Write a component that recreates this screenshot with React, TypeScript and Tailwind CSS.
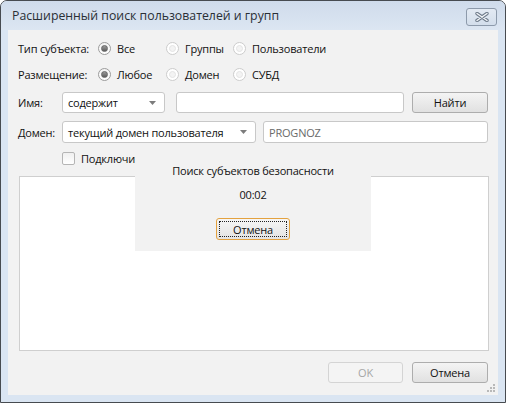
import React from "react";

const font = { fontFamily: '"Open Sans", "Noto Sans", sans-serif' };

function Radio({ checked }: { checked?: boolean }) {
  return checked ? (
    <span className="w-[13px] h-[13px] rounded-full border border-[#9c9c9c] bg-gradient-to-b from-[#f4f4f4] to-[#ffffff] flex items-center justify-center shrink-0">
      <span className="w-[7px] h-[7px] rounded-full border border-[#666] bg-gradient-to-b from-[#9a9a9a] to-[#5e5e5e]" />
    </span>
  ) : (
    <span className="w-[13px] h-[13px] rounded-full border border-[#cccccc] bg-white flex items-center justify-center shrink-0">
      <span className="w-[7px] h-[7px] rounded-full border border-[#e4e4e4] bg-[#f3f3f3]" />
    </span>
  );
}

function RadioItem({ label, checked, w }: { label: string; checked?: boolean; w: string }) {
  return (
    <div className={`flex items-center gap-[6px] ${w}`}>
      <Radio checked={checked} />
      <span className="whitespace-nowrap">{label}</span>
    </div>
  );
}

function Combo({ text, w }: { text: string; w: string }) {
  return (
    <div className={`${w} h-full bg-white border border-[#c8c8c8] rounded-[3px] flex items-center justify-between pl-[5px] pr-[8px]`}>
      <span className="whitespace-nowrap">{text}</span>
      <svg width="7" height="4" viewBox="0 0 7 4">
        <path d="M0 0 L7 0 L3.5 4 Z" fill="#7c7c7c" />
      </svg>
    </div>
  );
}

function Btn({ text, w, disabled }: { text: string; w: string; disabled?: boolean }) {
  return disabled ? (
    <div className={`${w} h-full rounded-[3px] border border-[#d4d4d4] bg-[#f4f4f4] flex items-center justify-center text-[#a6a6a6]`}>
      {text}
    </div>
  ) : (
    <div className={`${w} h-full rounded-[3px] border border-[#adadad] bg-gradient-to-b from-[#f4f4f4] to-[#e1e1e1] flex items-center justify-center`}>
      {text}
    </div>
  );
}

export default function App() {
  return (
    <div
      className="w-[506px] h-[403px] flex flex-col bg-[#dae5f2] border border-[#474b50] rounded-t-[7px] overflow-hidden text-[11px] tracking-[-0.2px] text-[#111] leading-none whitespace-nowrap"
      style={font}
    >
      <div className="h-[29px] shrink-0 flex items-center justify-between pl-[11px] pr-[8px] bg-gradient-to-b from-[#cfdbeb] to-[#dce6f2]">
        <span className="text-[12.3px] tracking-normal text-[#2a2f36] mt-[2px]">Расширенный поиск пользователей и групп</span>
        <div className="w-[31px] h-[18px] mt-[3px] rounded-[3px] border border-[#8d9aab] bg-gradient-to-b from-[#e3eaf3] to-[#d3deeb] flex items-center justify-center">
          <svg width="14" height="10" viewBox="0 0 14 10">
            <path d="M2 1.5 L12 8.5 M12 1.5 L2 8.5" stroke="#6f7b8b" strokeWidth="3.4" strokeLinecap="round" />
            <path d="M2 1.5 L12 8.5 M12 1.5 L2 8.5" stroke="#f2f5f9" strokeWidth="1.4" strokeLinecap="round" />
          </svg>
        </div>
      </div>

      <div className="mx-[7px] mb-[7px] flex-1 bg-[#f2f2f2] relative flex flex-col px-[10px] pt-[8px]">
        <div className="h-[20px] flex items-center">
          <span className="w-[80px]">Тип субъекта:</span>
          <RadioItem label="Все" checked w="w-[68px]" />
          <RadioItem label="Группы" w="w-[67px]" />
          <RadioItem label="Пользователи" w="w-[100px]" />
        </div>
        <div className="h-[20px] mt-[6px] flex items-center">
          <span className="w-[80px]">Размещение:</span>
          <RadioItem label="Любое" checked w="w-[68px]" />
          <RadioItem label="Домен" w="w-[67px]" />
          <RadioItem label="СУБД" w="w-[100px]" />
        </div>
        <div className="h-[21px] mt-[8px] flex items-center">
          <span className="w-[44px]">Имя:</span>
          <Combo text="содержит" w="w-[103px]" />
          <div className="w-[228px] h-full ml-[11px] bg-white border border-[#c8c8c8] rounded-[3px]" />
          <div className="ml-[8px] h-full">
            <Btn text="Найти" w="w-[76px]" />
          </div>
        </div>
        <div className="h-[22px] mt-[8px] flex items-center">
          <span className="w-[44px]">Домен:</span>
          <Combo text="текущий домен пользователя" w="w-[194px]" />
          <div className="w-[225px] h-full ml-[7px] bg-white border border-[#c8c8c8] rounded-[3px] flex items-center pl-[5px] text-[#6a6a6a]">
            PROGNOZ
          </div>
        </div>
        <div className="h-[13px] mt-[9px] flex items-center pl-[44px]">
          <span className="w-[13px] h-[13px] rounded-[2px] border border-[#b5b5b5] bg-gradient-to-b from-[#f0f0f0] to-[#ffffff]" />
          <span className="ml-[6px]">Подключить</span>
        </div>
        <div className="mt-[11px] ml-[1px] w-[470px] h-[175px] bg-white border border-[#cfcfcf]" />
        <div className="h-[21px] mt-[11px] flex justify-end gap-[9px]">
          <Btn text="OK" w="w-[75px]" disabled />
          <Btn text="Отмена" w="w-[76px]" />
        </div>

        <svg className="absolute right-[2px] bottom-[2px]" width="10" height="10" viewBox="0 0 10 10">
          <rect x="7" y="1" width="2" height="2" fill="#b9b9b9" />
          <rect x="4" y="4" width="2" height="2" fill="#b9b9b9" />
          <rect x="7" y="4" width="2" height="2" fill="#b9b9b9" />
          <rect x="1" y="7" width="2" height="2" fill="#b9b9b9" />
          <rect x="4" y="7" width="2" height="2" fill="#b9b9b9" />
          <rect x="7" y="7" width="2" height="2" fill="#b9b9b9" />
        </svg>

        <div className="absolute left-[127px] top-[118px] w-[236px] h-[103px] bg-[#f2f2f2] flex flex-col items-center">
          <span className="mt-[17px]">Поиск субъектов безопасности</span>
          <span className="mt-[13px]">00:02</span>
          <div className="mt-[18px] w-[74px] h-[22px] rounded-[3px] border border-[#e4a23f] bg-gradient-to-b from-[#f6f6f6] to-[#e3e3e3] p-[2px]">
            <div className="w-full h-full border border-dotted border-[#222] flex items-center justify-center">Отмена</div>
          </div>
        </div>
      </div>
    </div>
  );
}
